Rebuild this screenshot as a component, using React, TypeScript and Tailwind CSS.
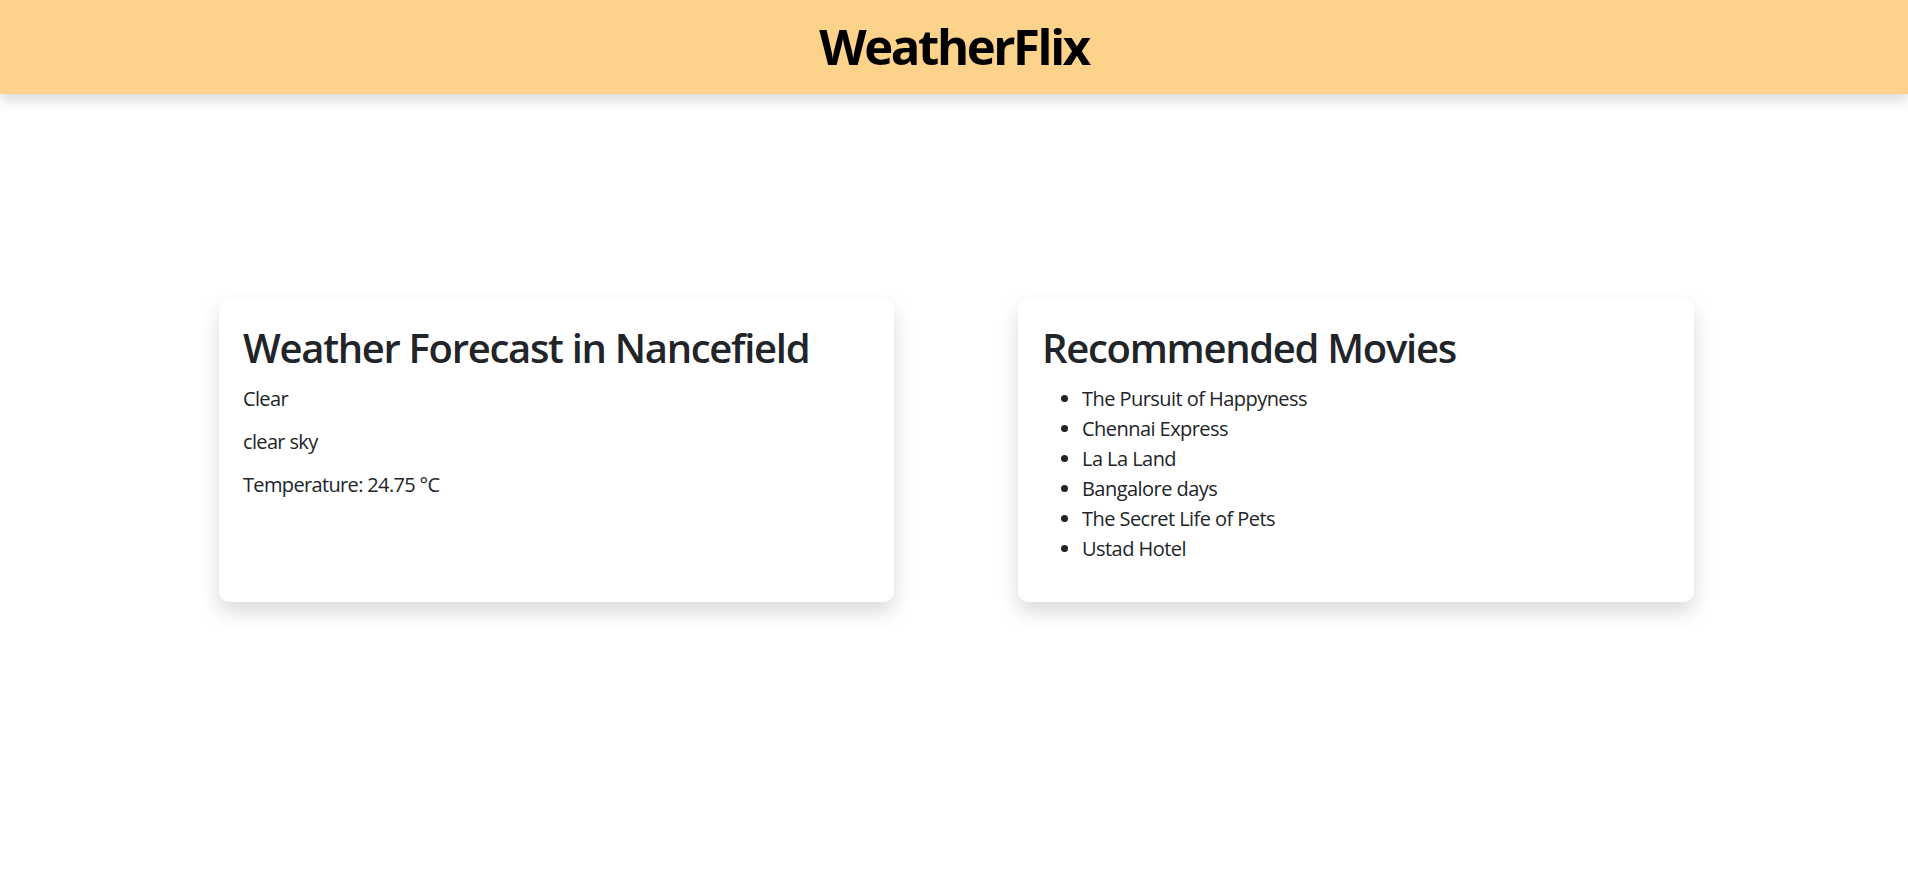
import React from "react";

const movies = [
  "The Pursuit of Happyness",
  "Chennai Express",
  "La La Land",
  "Bangalore days",
  "The Secret Life of Pets",
  "Ustad Hotel",
];

export default function App() {
  return (
    <div
      className="min-h-screen bg-white text-[#212529]"
      style={{ fontFamily: '"Open Sans", "Noto Sans", sans-serif' }}
    >
      <header className="h-[94px] bg-[#fdd28a] pt-[14px] shadow-[0_6px_12px_rgba(0,0,0,0.15)] relative z-10">
        <h1 className="text-center text-[49px] leading-[64px] font-bold text-black tracking-[-2.4px]">
          WeatherFlix
        </h1>
      </header>
      <main className="flex pl-[219px] gap-[124px] pt-[205px]">
        <section className="w-[675px] bg-white rounded-[10px] shadow-[0_10px_20px_rgba(0,0,0,0.15)] pt-[25px] pb-[25px] pl-[24px] pr-[24px]">
          <h2 className="text-[40px] leading-[48px] font-semibold mb-[12px] tracking-[-1.3px]">
            Weather Forecast in Nancefield
          </h2>
          <p className="text-[20px] leading-[30px] mb-[13px] tracking-[-0.65px]">Clear</p>
          <p className="text-[20px] leading-[30px] mb-[13px] tracking-[-0.65px]">clear sky</p>
          <p className="text-[20px] leading-[30px] mb-[13px] tracking-[-0.65px]">Temperature: 24.75 °C</p>
        </section>
        <section className="w-[676px] bg-white rounded-[10px] shadow-[0_10px_20px_rgba(0,0,0,0.15)] pt-[25px] pb-[25px] pl-[24px] pr-[24px]">
          <h2 className="text-[40px] leading-[48px] font-semibold mb-[12px] tracking-[-1.3px]">
            Recommended Movies
          </h2>
          <ul className="list-disc pl-[40px] mb-[13px]">
            {movies.map((m) => (
              <li key={m} className="text-[20px] leading-[30px] tracking-[-0.55px]">
                {m}
              </li>
            ))}
          </ul>
        </section>
      </main>
    </div>
  );
}
